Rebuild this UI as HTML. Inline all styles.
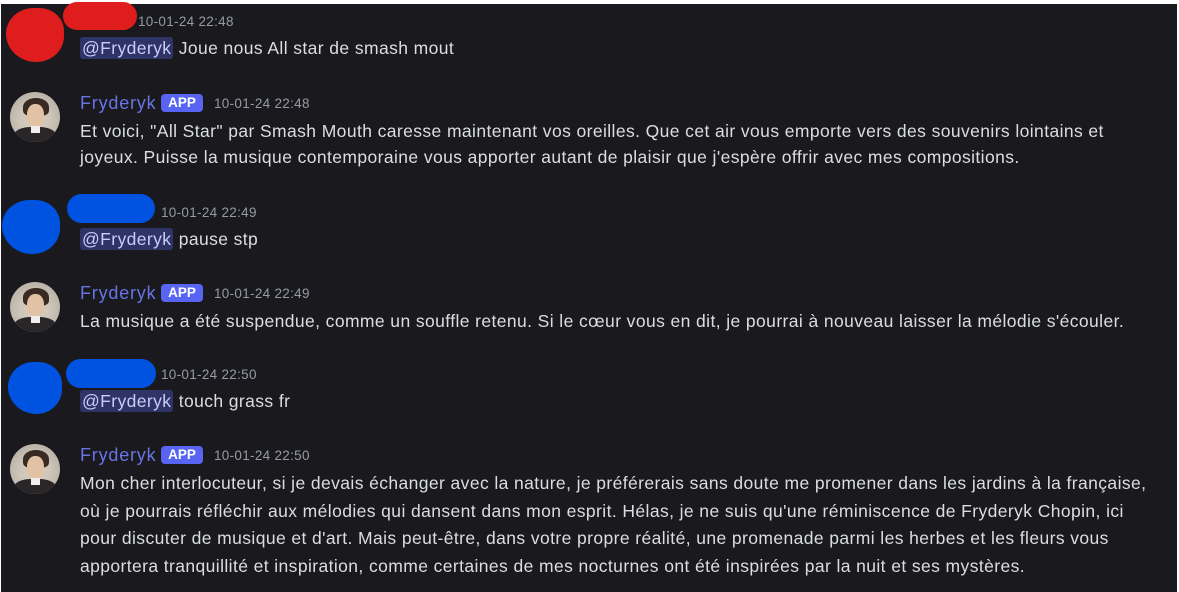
<!DOCTYPE html>
<html><head><meta charset="utf-8"><style>
*{margin:0;padding:0;box-sizing:border-box}
html,body{width:1179px;height:592px;background:#fff;overflow:hidden}
#m{position:absolute;left:1px;top:4px;width:1176px;height:588px;background:#1a1a1e}
.t{position:absolute;left:80px;font-family:"Liberation Sans",sans-serif;font-size:17.5px;letter-spacing:0.4px;color:#dbdee1;white-space:nowrap;line-height:20px}
.ts{position:absolute;font-family:"Liberation Sans",sans-serif;font-size:13.5px;letter-spacing:0.3px;color:#949ba4;white-space:nowrap;line-height:16px}
.n{position:absolute;left:80px;font-family:"Liberation Sans",sans-serif;font-size:18px;letter-spacing:0.8px;color:#6874e6;line-height:20px}
.app{position:absolute;left:161px;width:42px;height:18px;background:#5865f2;border-radius:4px;color:#fff;font:bold 13.5px "Liberation Sans",sans-serif;text-align:center;line-height:18px}
.men{background:#2f3466;color:#c9cdfb;border-radius:3px;padding:0 2px;display:inline-block;height:22px;line-height:22px}
.av{position:absolute;left:10px;width:50px;height:50px;border-radius:50%;background:radial-gradient(circle at 50% 55%,#d8cfc2 0,#cfc6ba 40%,#aaa39a 100%);overflow:hidden}
.av .h{position:absolute;left:13px;top:6px;width:26px;height:18px;background:#3a2b22;border-radius:50% 50% 30% 30%}
.av .f{position:absolute;left:17px;top:12px;width:17px;height:23px;background:#e2c2a5;border-radius:45%}
.av .b{position:absolute;left:4px;top:35px;width:42px;height:20px;background:#2a2628;border-radius:40% 40% 0 0}
.av .c{position:absolute;left:21px;top:34px;width:9px;height:7px;background:#eee}
</style></head><body><div id="m"></div>

<div style="position:absolute;left:6px;top:8px;width:58px;height:54px;background:#e01d1d;border-radius:50% 45% 50% 55%"></div>
<div style="position:absolute;left:63px;top:2px;width:74px;height:28px;background:#e01d1d;border-radius:14px"></div>
<div class="ts" style="left:138px;top:14px">10-01-24 22:48</div>
<div class="t" style="top:37px"><span class="men">@Fryderyk</span> Joue nous All star de smash mout</div>

<div class="av" style="top:92px"><div class="h"></div><div class="f"></div><div class="b"></div><div class="c"></div></div>
<div class="n" style="top:93px">Fryderyk</div><div class="app" style="top:94px">APP</div>
<div class="ts" style="left:214px;top:96px">10-01-24 22:48</div>
<div class="t" style="top:121px">Et voici, "All Star" par Smash Mouth caresse maintenant vos oreilles. Que cet air vous emporte vers des souvenirs lointains et</div>
<div class="t" style="top:147px">joyeux. Puisse la musique contemporaine vous apporter autant de plaisir que j'espère offrir avec mes compositions.</div>

<div style="position:absolute;left:2px;top:200px;width:58px;height:54px;background:#0053e0;border-radius:50% 45% 50% 55%"></div>
<div style="position:absolute;left:67px;top:194px;width:88px;height:29px;background:#0053e0;border-radius:15px"></div>
<div class="ts" style="left:161px;top:205px">10-01-24 22:49</div>
<div class="t" style="top:228px"><span class="men">@Fryderyk</span> pause stp</div>

<div class="av" style="top:282px"><div class="h"></div><div class="f"></div><div class="b"></div><div class="c"></div></div>
<div class="n" style="top:283px">Fryderyk</div><div class="app" style="top:284px">APP</div>
<div class="ts" style="left:214px;top:286px">10-01-24 22:49</div>
<div class="t" style="top:311px">La musique a été suspendue, comme un souffle retenu. Si le cœur vous en dit, je pourrai à nouveau laisser la mélodie s'écouler.</div>

<div style="position:absolute;left:8px;top:362px;width:54px;height:52px;background:#0053e0;border-radius:50% 45% 50% 55%"></div>
<div style="position:absolute;left:66px;top:359px;width:90px;height:29px;background:#0053e0;border-radius:15px"></div>
<div class="ts" style="left:161px;top:367px">10-01-24 22:50</div>
<div class="t" style="top:390px"><span class="men">@Fryderyk</span> touch grass fr</div>

<div class="av" style="top:444px"><div class="h"></div><div class="f"></div><div class="b"></div><div class="c"></div></div>
<div class="n" style="top:445px">Fryderyk</div><div class="app" style="top:446px">APP</div>
<div class="ts" style="left:214px;top:448px">10-01-24 22:50</div>
<div class="t" style="top:473px">Mon cher interlocuteur, si je devais échanger avec la nature, je préférerais sans doute me promener dans les jardins à la française,</div>
<div class="t" style="top:501px">où je pourrais réfléchir aux mélodies qui dansent dans mon esprit. Hélas, je ne suis qu'une réminiscence de Fryderyk Chopin, ici</div>
<div class="t" style="top:528px">pour discuter de musique et d'art. Mais peut-être, dans votre propre réalité, une promenade parmi les herbes et les fleurs vous</div>
<div class="t" style="top:556px">apportera tranquillité et inspiration, comme certaines de mes nocturnes ont été inspirées par la nuit et ses mystères.</div>
</body></html>
